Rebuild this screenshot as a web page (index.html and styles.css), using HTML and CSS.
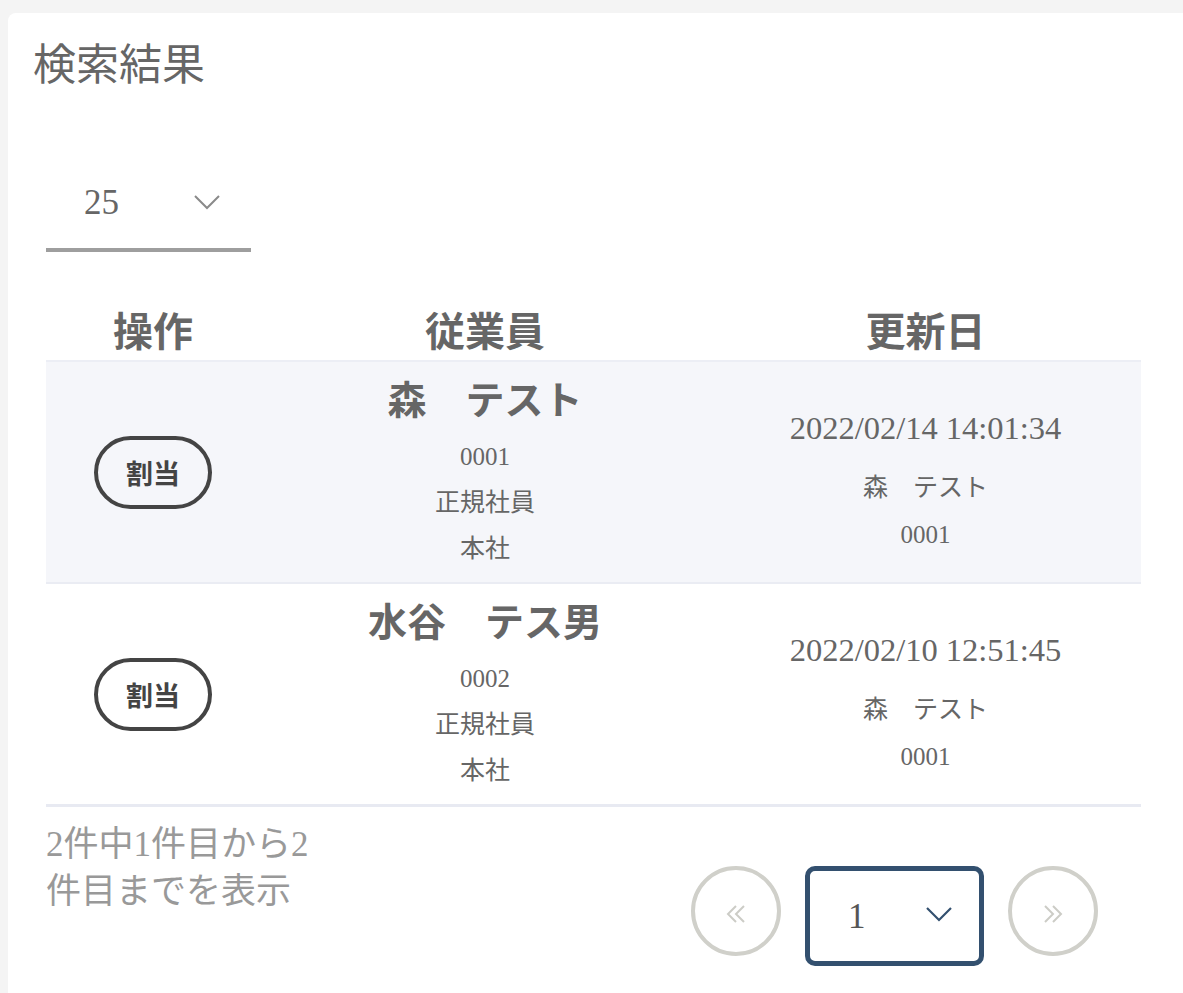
FILE: index.html
```html
<!DOCTYPE html>
<html lang="ja">
<head>
<meta charset="utf-8">
<title>検索結果</title>
<link rel="stylesheet" href="styles.css">
</head>
<body>
<div class="card">
  <h1 class="title">検索結果</h1>
  <div class="per-page">
    <span class="per-page-value">25</span>
    <svg class="chev" width="28" height="16" viewBox="0 0 28 16"><path d="M2 2 L14 14 L26 2" fill="none" stroke="#8a8a8a" stroke-width="2"/></svg>
  </div>
  <table class="results">
    <thead>
      <tr><th class="c-op">操作</th><th class="c-emp">従業員</th><th class="c-date">更新日</th></tr>
    </thead>
    <tbody>
      <tr class="shaded">
        <td class="c-op"><button class="assign">割当</button></td>
        <td class="c-emp">
          <div class="name">森　テスト</div>
          <div class="sub">0001</div>
          <div class="sub">正規社員</div>
          <div class="sub">本社</div>
        </td>
        <td class="c-date">
          <div class="date">2022/02/14 14:01:34</div>
          <div class="sub2 gap">森　テスト</div>
          <div class="sub2">0001</div>
        </td>
      </tr>
      <tr>
        <td class="c-op"><button class="assign">割当</button></td>
        <td class="c-emp">
          <div class="name">水谷　テス男</div>
          <div class="sub">0002</div>
          <div class="sub">正規社員</div>
          <div class="sub">本社</div>
        </td>
        <td class="c-date">
          <div class="date">2022/02/10 12:51:45</div>
          <div class="sub2 gap">森　テスト</div>
          <div class="sub2">0001</div>
        </td>
      </tr>
    </tbody>
  </table>
  <div class="footer">
    <p class="count">2件中1件目から2件目までを表示</p>
    <div class="pager">
      <span class="circle" aria-label="前へ">
        <svg width="22" height="20" viewBox="0 0 22 20"><path d="M11 2 L3 10 L11 18 M19 2 L11 10 L19 18" fill="none" stroke="#ccccc6" stroke-width="2"/></svg>
      </span>
      <div class="page-select">
        <span class="page-num">1</span>
        <svg class="chev" width="28" height="16" viewBox="0 0 28 16"><path d="M2 2 L14 14 L26 2" fill="none" stroke="#33506f" stroke-width="2.2"/></svg>
      </div>
      <span class="circle" aria-label="次へ">
        <svg width="22" height="20" viewBox="0 0 22 20"><path d="M3 2 L11 10 L3 18 M11 2 L19 10 L11 18" fill="none" stroke="#ccccc6" stroke-width="2"/></svg>
      </span>
    </div>
  </div>
</div>
</body>
</html>
```
FILE: styles.css
```css
html, body {
  margin: 0;
  padding: 0;
  background: #f4f4f4;
}
body {
  font-family: "Liberation Serif", "Noto Sans CJK JP", serif;
  color: #666;
}
.card {
  background: #fff;
  margin: 13px 0 0 8px;
  border-radius: 8px 0 0 0;
  min-height: 980px;
  padding: 23px 42px 0 38px;
  box-sizing: border-box;
}
.title {
  margin: 0 0 0 -13px;
  font-size: 43px;
  font-weight: 400;
  line-height: 60px;
  color: #666;
}
.per-page {
  margin-top: 74px;
  width: 205px;
  height: 82px;
  border-bottom: 4px solid #9e9e9e;
  display: flex;
  align-items: center;
  justify-content: space-between;
  padding: 0 30px 12px 38px;
  box-sizing: border-box;
}
.per-page-value {
  font-size: 35px;
  line-height: 66px;
  color: #666;
}
.per-page .chev {
  margin-top: -2px;
}
.results {
  margin-top: 44px;
  width: 1095px;
  border-collapse: collapse;
}
.results th {
  font-family: "Noto Sans CJK JP", sans-serif;
  font-size: 40px;
  font-weight: 700;
  color: #666;
  line-height: 46px;
  padding: 10px 0 8px;
  border-bottom: 2px solid #eceef5;
}
.c-op { width: 214px; text-align: center; }
.c-emp { width: 450px; text-align: center; }
.c-date { width: 431px; text-align: center; }
.results td {
  padding: 0;
  border-bottom: 2px solid #eaecf3;
}
.results tr.shaded td {
  background: #f5f6fa;
}
.results tbody tr:last-child td {
  border-bottom: 3px solid #e8eaf2;
}
td.c-op { vertical-align: middle; }
td.c-emp { vertical-align: top; padding: 6px 0 10px; }
td.c-date { vertical-align: top; padding-top: 43px; }
.assign {
  width: 118px;
  height: 73px;
  border: 4px solid #444;
  border-radius: 37px;
  background: transparent;
  font-family: "Noto Sans CJK JP", sans-serif;
  font-size: 27px;
  font-weight: 700;
  color: #444;
  padding: 0;
  cursor: pointer;
}
.name {
  font-family: "Liberation Serif", "Noto Sans CJK JP", sans-serif;
  font-size: 39px;
  font-weight: 700;
  line-height: 66px;
  color: #666;
}
.sub {
  font-size: 25px;
  line-height: 46px;
}
.date {
  font-size: 32.5px;
  line-height: 46px;
}
.sub2 {
  font-size: 25px;
  line-height: 47px;
}
.sub2.gap { margin-top: 13px; }
.footer {
  display: flex;
  justify-content: space-between;
  align-items: flex-start;
}
.count {
  margin: 14px 0 0;
  width: 290px;
  font-size: 35px;
  line-height: 47px;
  color: #999;
}
.pager {
  margin-top: 59px;
  margin-right: 43px;
  display: flex;
  align-items: flex-start;
  gap: 24px;
}
.circle {
  width: 90px;
  height: 90px;
  box-sizing: border-box;
  border: 4px solid #d0d0ca;
  border-radius: 50%;
  display: flex;
  align-items: center;
  justify-content: center;
  padding-top: 6px;
}
.page-select {
  width: 179px;
  height: 100px;
  box-sizing: border-box;
  border: 5px solid #33506f;
  border-radius: 10px;
  display: flex;
  align-items: center;
  justify-content: space-between;
  padding: 0 26px 0 38px;
}
.page-num {
  font-size: 35px;
  color: #555;
  padding-top: 2px;
}
.page-select .chev { margin-top: -4px; }
```
